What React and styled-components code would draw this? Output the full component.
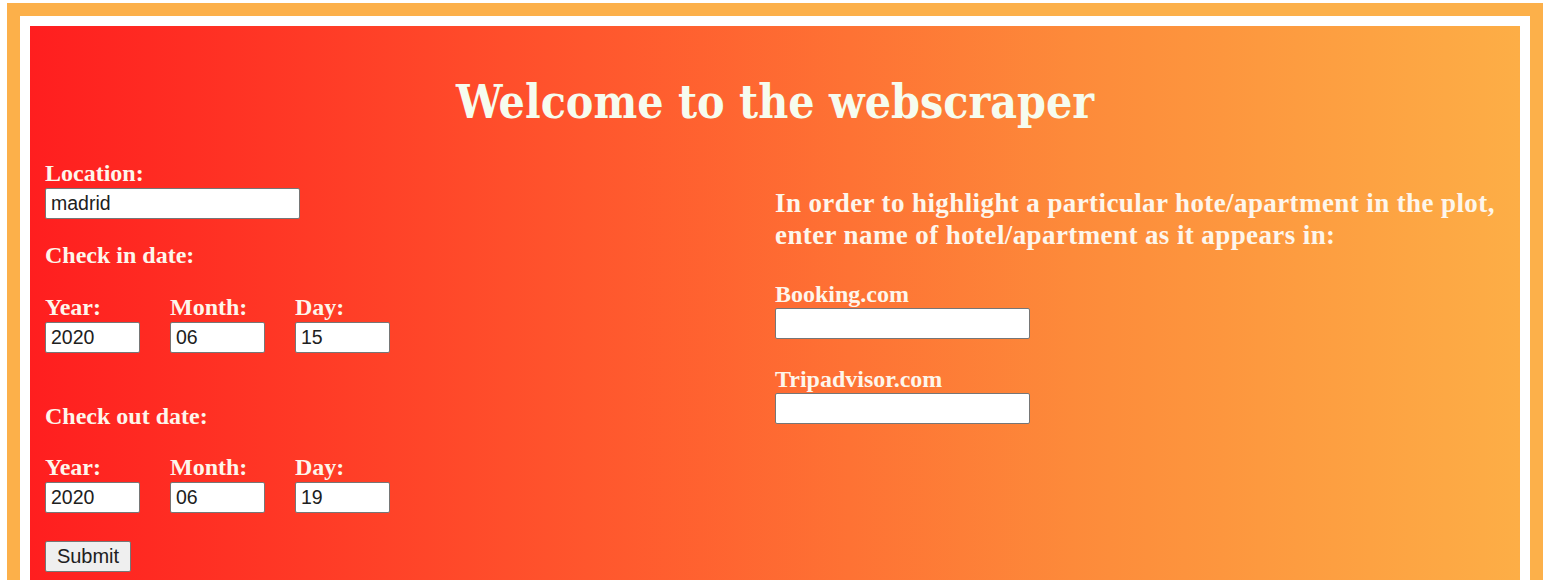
import React from "react";
import styled, { createGlobalStyle } from "styled-components";

const Global = createGlobalStyle`
  html, body { margin: 0; padding: 0; background: #ffffff; }
  body { font-family: "Liberation Serif", "Times New Roman", serif; }
`;

const Frame = styled.div`
  margin: 3px 11px 0 7px;
  border: 13px solid #fcb04a;
  border-bottom: none;
  padding: 10px 10px 0 10px;
  background: #ffffff;
`;

const Panel = styled.main`
  background: linear-gradient(to right, #ff1e1f 0%, #ff5a2e 40%, #fd8a3a 70%, #fdae46 100%);
  padding: 0 15px 8px 15px;
  min-height: 560px;
  box-sizing: border-box;
`;

const Title = styled.h1`
  margin: 0;
  padding-top: 48px;
  text-align: center;
  font-family: "DejaVu Serif", Georgia, serif;
  font-stretch: condensed;
  font-weight: 700;
  font-size: 46px;
  line-height: 56px;
  color: #f6fcef;
`;

const Columns = styled.div`
  display: grid;
  grid-template-columns: 1fr 1fr;
  margin-top: 30px;
`;

const Column = styled.div`
  display: flex;
  flex-direction: column;
  align-items: flex-start;
  padding-top: ${(p) => p.$top || 0}px;
`;

const Label = styled.label`
  display: block;
  font-weight: 700;
  font-size: 24px;
  line-height: 26px;
  color: #fdf6ec;
  margin-top: ${(p) => p.$gap || 0}px;
`;

const Heading = styled.h3`
  margin: ${(p) => p.$gap || 0}px 0 0 0;
  font-weight: 700;
  font-size: 24px;
  line-height: 26px;
  color: #fdf6ec;
`;

const Intro = styled.h2`
  margin: 0;
  font-weight: 700;
  font-size: 27px;
  line-height: 32px;
  letter-spacing: 0.4px;
  color: #fdf6ec;
`;

const TextInput = styled.input`
  display: block;
  box-sizing: border-box;
  width: ${(p) => p.$w || 255}px;
  height: 31px;
  margin-top: ${(p) => p.$gap ?? 2}px;
  padding: 1px 5px;
  border: 1px solid #767676;
  border-radius: 2px;
  background: #ffffff;
  font-family: "Liberation Sans", Arial, sans-serif;
  font-size: 19.5px;
  color: #202020;
  outline: none;
`;

const DateRow = styled.div`
  display: flex;
  gap: 30px;
  margin-top: ${(p) => p.$gap || 26}px;
`;

const DatePart = styled.div`
  display: flex;
  flex-direction: column;
`;

const SubmitButton = styled.button`
  margin-top: 28px;
  box-sizing: border-box;
  width: 86px;
  height: 31px;
  padding: 0;
  border: 1px solid #767676;
  border-radius: 2px;
  background: #efefef;
  font-family: "Liberation Sans", Arial, sans-serif;
  font-size: 20px;
  color: #202020;
`;

function DateFields({ year, month, day, gap }) {
  return (
    <DateRow $gap={gap}>
      <DatePart>
        <Label>Year:</Label>
        <TextInput $w={95} defaultValue={year} />
      </DatePart>
      <DatePart>
        <Label>Month:</Label>
        <TextInput $w={95} defaultValue={month} />
      </DatePart>
      <DatePart>
        <Label>Day:</Label>
        <TextInput $w={95} defaultValue={day} />
      </DatePart>
    </DateRow>
  );
}

export default function App() {
  return (
    <>
      <Global />
      <Frame>
        <Panel>
          <Title>Welcome to the webscraper</Title>
          <Columns>
            <Column>
              <Label>Location:</Label>
              <TextInput $w={255} defaultValue="madrid" />
              <Heading $gap={23}>Check in date:</Heading>
              <DateFields year="2020" month="06" day="15" gap={26} />
              <Heading $gap={50}>Check out date:</Heading>
              <DateFields year="2020" month="06" day="19" gap={25} />
              <SubmitButton>Submit</SubmitButton>
            </Column>
            <Column $top={27}>
              <Intro>
                In order to highlight a particular hote/apartment in the plot,
                <br />
                enter name of hotel/apartment as it appears in:
              </Intro>
              <Label $gap={30}>Booking.com</Label>
              <TextInput $gap={1} />
              <Label $gap={27}>Tripadvisor.com</Label>
              <TextInput $gap={1} />
            </Column>
          </Columns>
        </Panel>
      </Frame>
    </>
  );
}
